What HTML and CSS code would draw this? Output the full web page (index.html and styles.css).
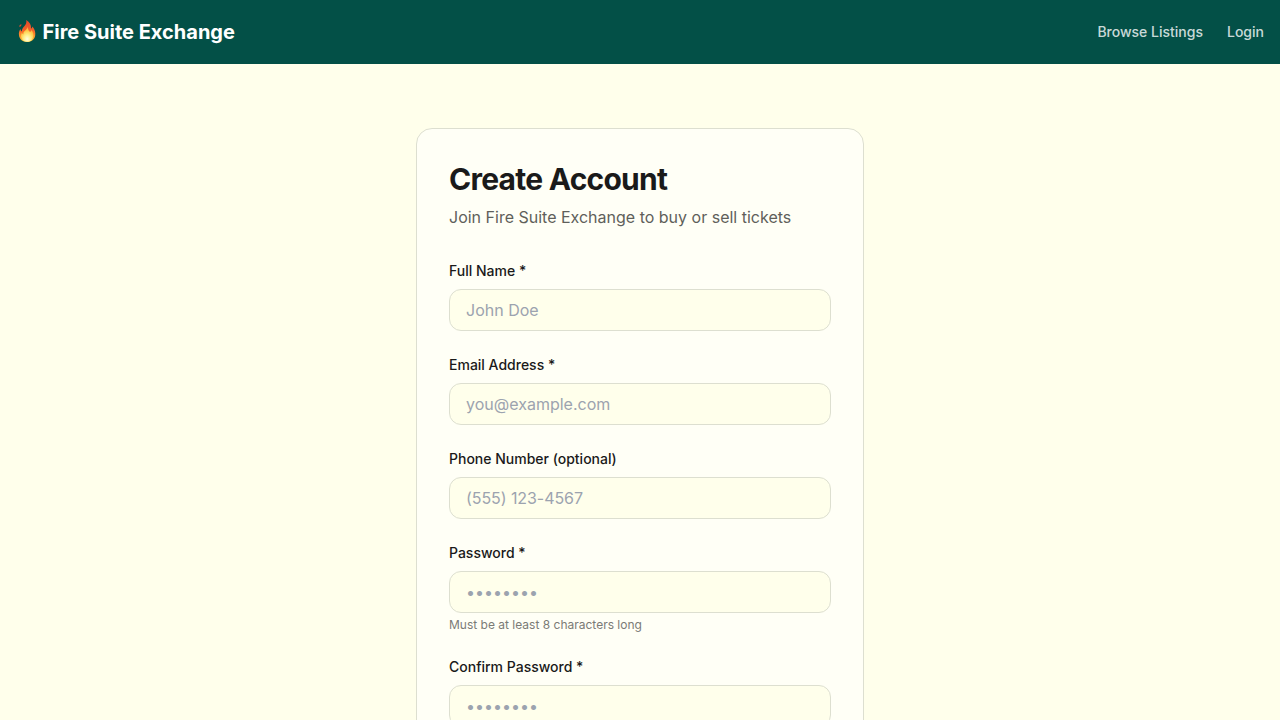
FILE: index.html
```html
<!DOCTYPE html>
<html lang="en">
<head>
<meta charset="utf-8">
<title>Fire Suite Exchange</title>
<link rel="stylesheet" href="styles.css">
</head>
<body>
<header class="nav">
  <a class="brand">
    <svg class="flame" viewBox="0 0 18 22" aria-hidden="true">
      <defs>
        <linearGradient id="outer" x1="0" y1="0" x2="0" y2="1"><stop offset="0" stop-color="#e5472a"/><stop offset=".45" stop-color="#f4602a"/><stop offset=".75" stop-color="#ff9c2c"/><stop offset="1" stop-color="#ffc83d"/></linearGradient>
        <radialGradient id="inner" cx=".5" cy=".82" r=".8"><stop offset="0" stop-color="#fffde2"/><stop offset=".35" stop-color="#fff08a"/><stop offset=".7" stop-color="#ffc845"/><stop offset="1" stop-color="#ff9a30"/></radialGradient>
      </defs>
      <path fill="url(#outer)" d="M8.200 0C11.800 2 13.400 5 13 8.700c.8-.4 1.300-1.200 1.500-2.200 2.400 3 3.200 6.100 2.700 9-.7 4-3.900 6.500-8 6.500-4.300 0-7.700-2.600-8.200-6.700-.4-2.600.3-4.700 1.500-6.400.1 1.100.5 2 1.300 2.500C4 6.500 9.500 5.500 8.200 0Z"/>
      <path fill="#d94b2d" d="M1.300 6.800C1 5.300 2 4.600 3.500 4.200 3.500 5.700 2.700 6.800 1.300 6.800Z"/>
      <path fill="url(#inner)" d="M9.700 6.500c.4 3.200 1 4.700 2.500 5.600.7-.5 1.200-1.200 1.300-2 1.800 2.500 2.300 4.700 1.600 7.100-.8 2.900-3.100 4.600-6 4.600-3.100 0-5.500-2-6-5.100-.2-1.500.1-2.800.8-4 .3.800.8 1.400 1.500 1.700C5 10.500 9.300 10.500 9.700 6.500Z"/>
    </svg>
    <span>Fire Suite Exchange</span>
  </a>
  <nav class="links"><a>Browse Listings</a><a>Login</a></nav>
</header>
<main class="main">
  <section class="card">
    <h1 class="title">Create Account</h1>
    <p class="subtitle">Join Fire Suite Exchange to buy or sell tickets</p>
    <form class="form">
      <div class="field"><label class="label" for="name">Full Name *</label><input class="input" id="name" type="text" placeholder="John Doe"></div>
      <div class="field"><label class="label" for="email">Email Address *</label><input class="input" id="email" type="email" placeholder="you@example.com"></div>
      <div class="field"><label class="label" for="phone">Phone Number (optional)</label><input class="input phone" id="phone" type="tel" placeholder="(555) 123-4567"></div>
      <div class="field"><label class="label" for="pw">Password *</label><input class="input" id="pw" type="password" placeholder="••••••••"><p class="hint">Must be at least 8 characters long</p></div>
      <div class="field"><label class="label" for="pw2">Confirm Password *</label><input class="input" id="pw2" type="password" placeholder="••••••••"></div>
    </form>
  </section>
</main>
</body>
</html>
```
FILE: styles.css
```css
* { box-sizing: border-box; margin: 0; padding: 0; }
html { height: 100%; overflow: hidden; }
body { height: 100%; overflow: hidden; background: #ffffeb; color: #1a1a1a; font: 16px/24px Inter, sans-serif; }
.nav { height: 64px; padding: 0 16px; background: #035047; display: flex; align-items: center; justify-content: space-between; }
.brand { display: flex; align-items: center; color: #fff; font-size: 20px; line-height: 28px; font-weight: 700; }
.flame { width: 18px; height: 22px; margin: 0 6.500px 2px 2px; }
.links { display: flex; gap: 24px; color: rgba(255,255,255,.8); font-size: 14px; line-height: 20px; font-weight: 500; }
.main { height: calc(100% - 64px); overflow: hidden; padding: 64px 16px; }
.card { width: 448px; margin: 0 auto; padding: 32px; background: #fffff6; border: 1px solid #dddfd0; border-radius: 16px; }
.title { font-size: 30px; line-height: 36px; font-weight: 700; letter-spacing: -.75px; margin-bottom: 8px; }
.subtitle { color: #5f5f5b; margin-bottom: 32px; }
.form { display: flex; flex-direction: column; gap: 24px; }
.label { display: block; font-size: 14px; line-height: 20px; font-weight: 500; margin-bottom: 8px; }
.input { display: block; width: 100%; height: 42px; padding: 8px 16px; font: inherit; background: #ffffeb; border: 1px solid #dddfd0; border-radius: 12px; }
.input::placeholder { color: #9ca3af; opacity: 1; }
.phone { letter-spacing: -.07px; }
.hint { margin-top: 4px; font-size: 12px; line-height: 16px; color: #7b7b76; }
```
